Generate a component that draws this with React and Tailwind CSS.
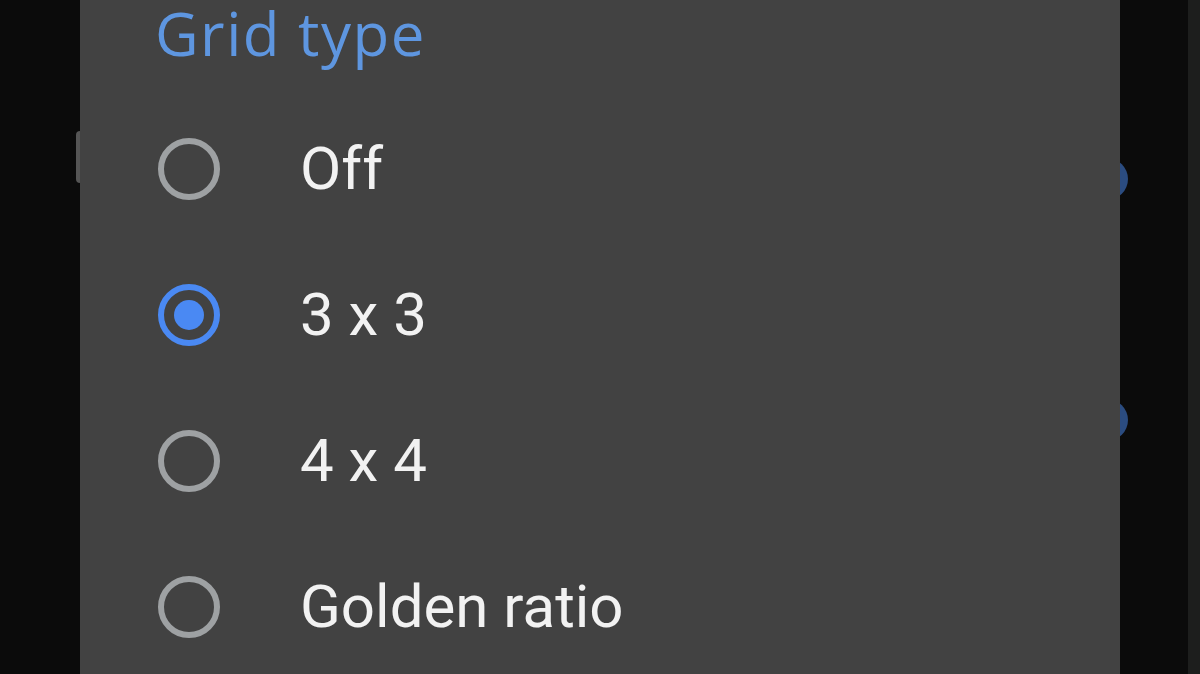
const options = ['Off', '3 x 3', '4 x 4', 'Golden ratio'];

const Radio = ({ checked }) => (
  <div
    className={`w-[62px] h-[62px] rounded-full border-[6px] flex items-center justify-center shrink-0 ${
      checked ? 'border-[#4a89f3]' : 'border-[#9ea1a3]'
    }`}
  >
    {checked && <div className="w-[30px] h-[30px] rounded-full bg-[#4a89f3]" />}
  </div>
);

export default function App() {
  const selected = '3 x 3';

  return (
    <div className="w-[1200px] h-[674px] bg-[#0b0b0b] flex overflow-hidden" style={{ fontFamily: 'Roboto, sans-serif' }}>
      {/* left edge of the screen behind the dialog */}
      <div className="w-[80px] shrink-0 relative">
        <div className="absolute left-[76px] top-[131px] w-[6px] h-[52px] rounded-l bg-[#555555]" />
      </div>

      {/* dialog */}
      <div className="w-[1040px] shrink-0 bg-[#424242] relative z-10">
        <div className="h-[96px] pl-[75px] pt-[3px]">
          <h2
            className="text-[60px] leading-none tracking-[1.5px] text-[#5e96e0]"
            style={{ fontFamily: '"Open Sans", sans-serif' }}
          >
            Grid type
          </h2>
        </div>
        <ul>
          {options.map(opt => (
            <li key={opt} className="h-[146px] flex items-center pl-[78px] gap-[80px]">
              <Radio checked={opt === selected} />
              <span className="text-[60px] leading-none text-[#f2f2f2]">{opt}</span>
            </li>
          ))}
        </ul>
      </div>

      {/* right side behind dialog: toggle knobs peeking out */}
      <div className="flex-1 relative">
        <div className="absolute left-[-34px] top-[158px] w-[42px] h-[42px] rounded-full bg-[#2b4c80]" />
        <div className="absolute left-[-34px] top-[399px] w-[42px] h-[42px] rounded-full bg-[#2b4c80]" />
        <div className="absolute right-0 top-0 bottom-0 w-[12px] bg-[#1d1e1d]" />
      </div>
    </div>
  );
}
